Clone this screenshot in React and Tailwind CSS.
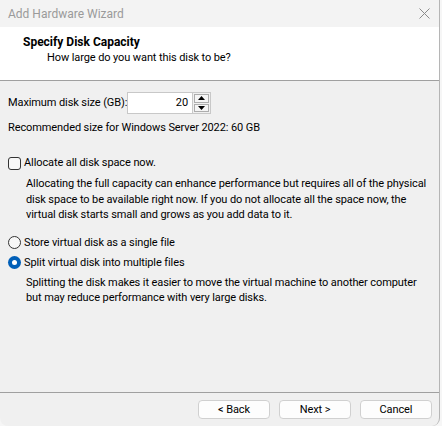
import React from 'react';

function Spinner() {
  return (
    <div className="flex h-[22px] border border-[#c8c8c8]">
      <div className="w-[64px] h-full bg-white flex items-center justify-end pr-[4px]">20</div>
      <div className="w-[18px] h-full flex flex-col gap-[1px] p-[1px] bg-[#f0f0f0] border-l border-[#c8c8c8]">
        <div className="flex-1 flex items-center justify-center border border-[#adadad] bg-[#f5f5f5]">
          <svg width="7" height="4" viewBox="0 0 7 4"><path d="M0 4 L3.5 0 L7 4 Z" fill="#000" /></svg>
        </div>
        <div className="flex-1 flex items-center justify-center border border-[#adadad] bg-[#f5f5f5]">
          <svg width="7" height="4" viewBox="0 0 7 4"><path d="M0 0 L3.5 4 L7 0 Z" fill="#000" /></svg>
        </div>
      </div>
    </div>
  );
}

function Radio({ checked }) {
  return checked ? (
    <span className="w-[13px] h-[13px] rounded-full bg-[#005fb8] flex items-center justify-center shrink-0">
      <span className="w-[5px] h-[5px] rounded-full bg-white" />
    </span>
  ) : (
    <span className="w-[13px] h-[13px] rounded-full border border-[#333] bg-[#f7f7f7] shrink-0" />
  );
}

function Button({ children }) {
  return (
    <button className="w-[72px] h-[19px] rounded-[4px] border border-[#d0d0d0] bg-[#fdfdfd] text-black leading-none flex items-center justify-center">
      {children}
    </button>
  );
}

export default function App() {
  return (
    <div className="w-[442px] h-[426px] bg-[#f6f6f6] text-[11px] tracking-[-0.1px] text-black" style={{ fontFamily: 'Roboto, "Liberation Sans", sans-serif' }}>
      <div className="w-[440px] h-[426px] flex flex-col bg-[#f0f0f0] border-r border-[#b5b5b5] rounded-b-[8px] overflow-hidden">
        {/* Title bar */}
        <div className="h-[27px] shrink-0 bg-[#f3f3f3] flex items-center justify-between pl-[8px] pr-[9px]">
          <span className="text-[#9a9a9a] text-[12px] tracking-normal">Add Hardware Wizard</span>
          <svg width="11" height="11" viewBox="0 0 11 11">
            <path d="M0.5 0.5 L10.5 10.5 M10.5 0.5 L0.5 10.5" stroke="#8a8a8a" strokeWidth="1" />
          </svg>
        </div>

        {/* Header */}
        <div className="h-[54px] shrink-0 bg-white border-b border-[#a0a0a0] pt-[7px] leading-[16px]">
          <div className="pl-[23px] font-bold text-[12px] tracking-normal">Specify Disk Capacity</div>
          <div className="pl-[47px]">How large do you want this disk to be?</div>
        </div>

        {/* Body */}
        <div className="flex-1 flex flex-col px-[8px] leading-[16px] whitespace-nowrap">
          <div className="mt-[11px] flex items-center h-[22px]">
            <span className="w-[119px]">Maximum disk size (GB):</span>
            <Spinner />
          </div>
          <div className="mt-[6px]">Recommended size for Windows Server 2022: 60 GB</div>

          <div className="mt-[19px] flex items-center gap-[3px] h-[16px]">
            <span className="w-[13px] h-[13px] rounded-[3px] border border-[#333] bg-[#f7f7f7] shrink-0" />
            <span>Allocate all disk space now.</span>
          </div>
          <div className="mt-[5px] pl-[18px] leading-[15.5px]">
            <div>Allocating the full capacity can enhance performance but requires all of the physical</div>
            <div>disk space to be available right now. If you do not allocate all the space now, the</div>
            <div>virtual disk starts small and grows as you add data to it.</div>
          </div>

          <div className="mt-[12px] flex items-center gap-[3px] h-[16px]">
            <Radio />
            <span>Store virtual disk as a single file</span>
          </div>
          <div className="mt-[4px] flex items-center gap-[3px] h-[16px]">
            <Radio checked />
            <span>Split virtual disk into multiple files</span>
          </div>
          <div className="mt-[4px] pl-[18px] leading-[15px]">
            <div>Splitting the disk makes it easier to move the virtual machine to another computer</div>
            <div>but may reduce performance with very large disks.</div>
          </div>
        </div>

        {/* Footer */}
        <div className="h-[34px] shrink-0 border-t border-[#a0a0a0] pt-[7px] flex justify-end gap-[9px] pr-[7px]">
          <Button>&lt; Back</Button>
          <Button>Next &gt;</Button>
          <Button>Cancel</Button>
        </div>
      </div>
    </div>
  );
}
